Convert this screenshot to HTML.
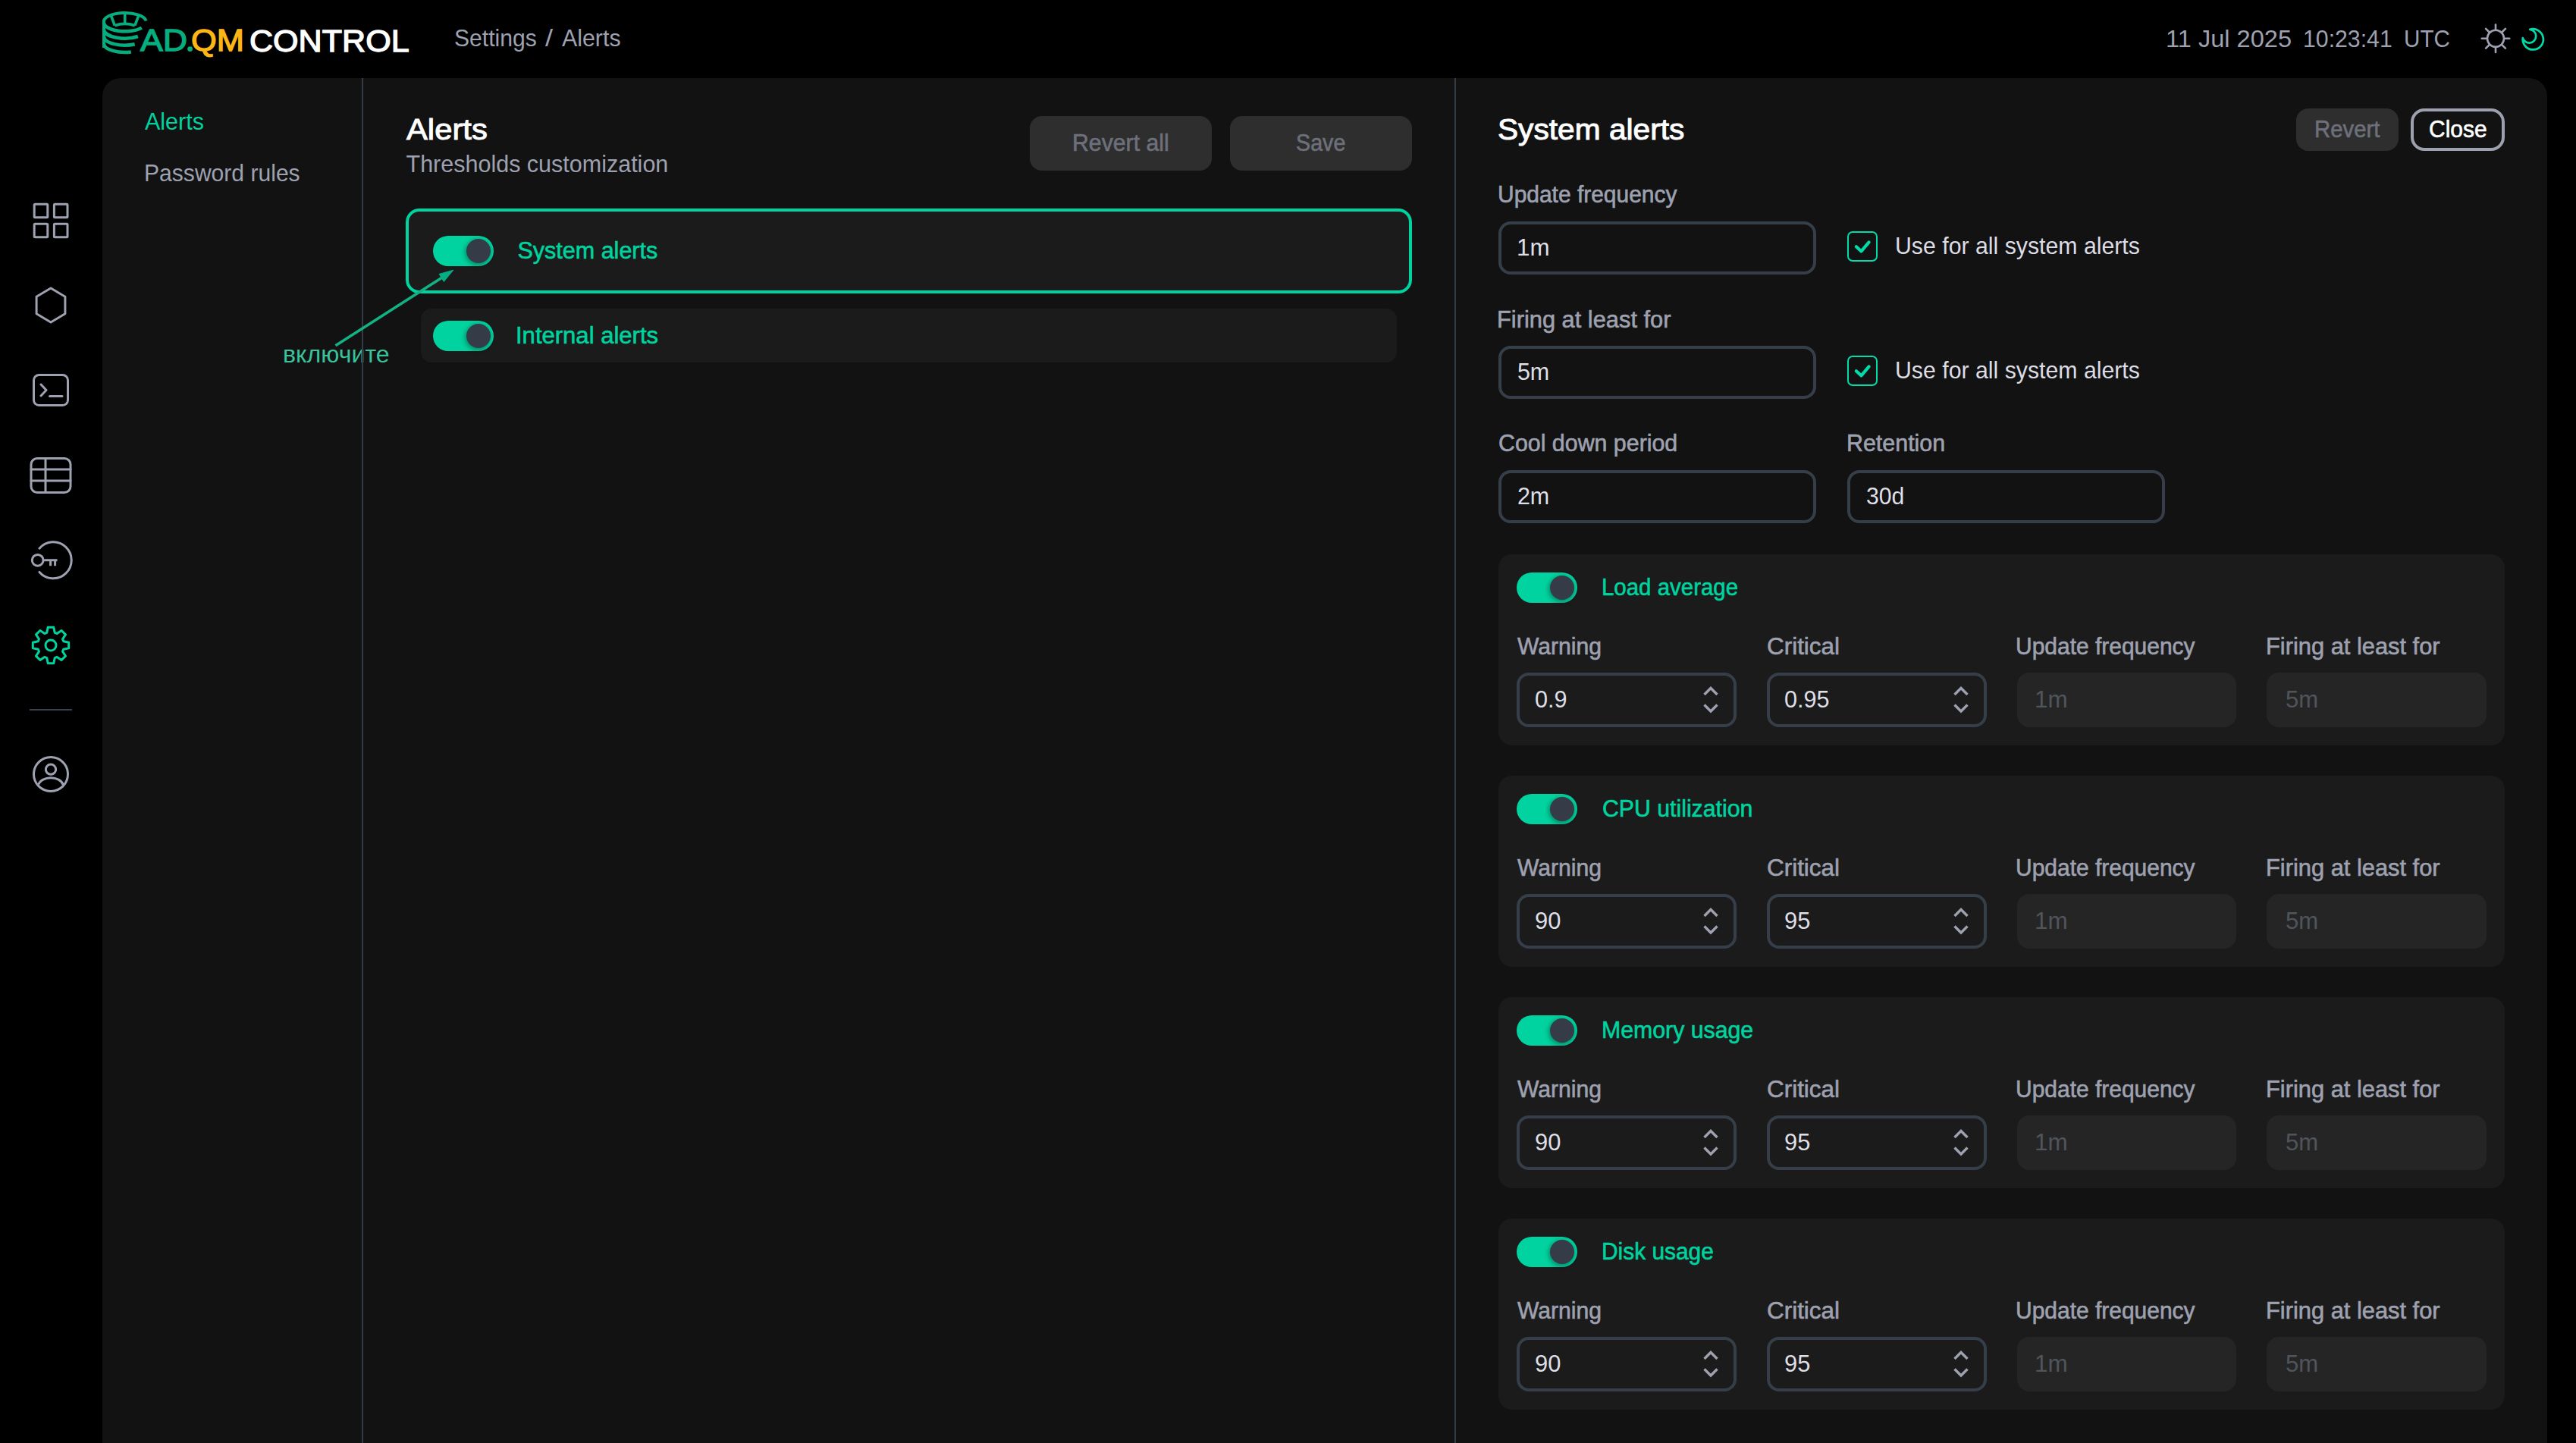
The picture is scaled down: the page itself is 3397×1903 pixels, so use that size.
<!DOCTYPE html>
<html><head><meta charset="utf-8"><title>ADQM Control - Alerts</title><style>
html,body{margin:0;padding:0;width:3397px;height:1903px;overflow:hidden;background:#000;font-family:"Liberation Sans",sans-serif;}
.a{position:absolute;box-sizing:border-box}
.t{position:absolute;line-height:1;white-space:nowrap}
svg{position:absolute;left:0;top:0;overflow:visible}
.tg{position:absolute;width:80px;height:40px;border-radius:20px;background:#00d39f}
.tg i{position:absolute;left:44px;top:4px;width:32px;height:32px;border-radius:50%;background:#363c47;box-shadow:-1px 2px 6px 1px rgba(0,0,0,.33)}
.inp{position:absolute;box-sizing:border-box;border:4px solid #363f49;border-radius:16px}
.dis{position:absolute;border-radius:16px;background:#252525}
.card{position:absolute;background:#1b1b1b;border-radius:18px}
</style></head><body>
<svg width="10" height="10" fill="none" stroke="#06ad7e" stroke-width="4">
<path d="M137,30 A27.6,11.7 0 0,1 192.6,27.5"/>
<path d="M137,26 L137,63"/>
<path d="M137,29.7 A27.6,11.7 0 0,0 186.8,36.6" stroke-width="4.5"/>
<path d="M137,39.1 A27.6,11.7 0 0,0 181.9,48.0" stroke-width="4.5"/>
<path d="M137,48.5 A27.6,11.7 0 0,0 177.7,58.3" stroke-width="4.5"/>
<path d="M137,57.9 A27.6,11.7 0 0,0 172.8,68.5" stroke-width="4.5"/>
<path d="M151.3,33.7 Q164.6,29.0 177.9,33.7" stroke-width="3.6"/>
<path d="M146.4,20.5 L151.3,33.7 M164.7,19 L164.7,31 M182.8,20.5 L177.9,33.7" stroke-width="3.6"/>
</svg>
<div class="t" style="left:184.90px;top:33.22px;font-size:40.5px;color:#06ad7e;transform:scaleX(1.1036);transform-origin:0 0;-webkit-text-stroke:1.3px #06ad7e;">AD</div>
<svg width="10" height="10"><circle cx="250.6" cy="64.6" r="3.4" fill="#06ad7e"/></svg>
<div class="t" style="left:252.46px;top:33.22px;font-size:40.5px;color:#fdb714;transform:scaleX(1.0721);transform-origin:0 0;-webkit-text-stroke:1.3px #fdb714;">QM</div>
<div class="t" style="left:328.87px;top:33.62px;font-size:40.5px;color:#ffffff;transform:scaleX(1.0636);transform-origin:0 0;-webkit-text-stroke:1.3px #ffffff;">CONTROL</div>
<div class="t" style="left:598.71px;top:35.08px;font-size:30.5px;color:#9ea1b0;transform:scaleX(0.9881);transform-origin:0 0;">Settings</div>
<div class="t" style="left:719.00px;top:35.08px;font-size:30.5px;color:#9ea1b0;transform:scaleX(1.1889);transform-origin:0 0;">/</div>
<div class="t" style="left:741.40px;top:35.08px;font-size:30.5px;color:#9ea1b0;transform:scaleX(0.9949);transform-origin:0 0;">Alerts</div>
<div class="t" style="left:2856.16px;top:35.98px;font-size:30.5px;color:#9ea1b0;transform:scaleX(1.0686);transform-origin:0 0;">11 Jul 2025</div>
<div class="t" style="left:3037.32px;top:35.98px;font-size:30.5px;color:#9ea1b0;transform:scaleX(0.9914);transform-origin:0 0;">10:23:41</div>
<div class="t" style="left:3169.76px;top:35.98px;font-size:30.5px;color:#9ea1b0;transform:scaleX(0.9717);transform-origin:0 0;">UTC</div>
<svg width="10" height="10" fill="none" stroke="#9ea1b0" stroke-width="2.6" stroke-linecap="round"><circle cx="3291" cy="50.8" r="11"/><path d="M3303.5,50.8 L3309.2,50.8"/><path d="M3299.8,59.6 L3303.9,63.7"/><path d="M3291.0,63.3 L3291.0,69.0"/><path d="M3282.2,59.6 L3278.1,63.7"/><path d="M3278.5,50.8 L3272.8,50.8"/><path d="M3282.2,42.0 L3278.1,37.9"/><path d="M3291.0,38.3 L3291.0,32.6"/><path d="M3299.8,42.0 L3303.9,37.9"/></svg>
<svg width="10" height="10" fill="none" stroke="#00d9a8" stroke-width="2.7" stroke-linejoin="round" stroke-linecap="round"><path d="M3336.2,38.9 A13.6,13.6 0 1,1 3326.8,50.2 A8.88,8.88 0 1,0 3336.2,38.9 Z"/></svg>
<svg width="10" height="10" fill="none" stroke="#9ea1b0" stroke-width="3" stroke-linejoin="round" stroke-linecap="round"><rect x="45.2" y="269.2" width="17.6" height="17.6" rx="1"/><rect x="71.4" y="269.2" width="17.6" height="17.6" rx="1"/><rect x="45.2" y="295.2" width="17.6" height="17.6" rx="1"/><rect x="71.4" y="295.2" width="17.6" height="17.6" rx="1"/><polygon points="67.0,380.0 48.1,391.2 48.1,413.8 67.0,425.0 85.9,413.8 85.9,391.2"/><rect x="44.5" y="494.5" width="45" height="40" rx="7"/><path d="M54,507 L61,514.5 L54,522 M65.5,522.5 L82,522.5"/><rect x="41" y="604.5" width="52" height="45" rx="8"/><path d="M41,619 L93,619 M41,634 L93,634 M60,604.5 L60,649.5"/><path d="M52,723.2 A24,24 0 1,1 52,754.4"/><circle cx="49.7" cy="738.8" r="7.4"/><path stroke-linecap="butt" d="M57,738.8 L75.5,738.8 M66.6,738.8 L66.6,746.2 M72.6,738.8 L72.6,746.2"/></svg>
<svg width="10" height="10" fill="none" stroke="#00d39f" stroke-width="3" stroke-linejoin="round"><path d="M83.7,845.8 L90.7,847.2 L90.7,854.8 L83.7,856.2 L82.5,859.2 L86.5,865.1 L81.1,870.5 L75.2,866.5 L72.2,867.7 L70.8,874.7 L63.2,874.7 L61.8,867.7 L58.8,866.5 L52.9,870.5 L47.5,865.1 L51.5,859.2 L50.3,856.2 L43.3,854.8 L43.3,847.2 L50.3,845.8 L51.5,842.8 L47.5,836.9 L52.9,831.5 L58.8,835.5 L61.8,834.3 L63.2,827.3 L70.8,827.3 L72.2,834.3 L75.2,835.5 L81.1,831.5 L86.5,836.9 L82.5,842.8 Z"/><circle cx="67" cy="851" r="7"/></svg>
<div class="a" style="left:39px;top:935px;width:56px;height:2px;background:#3a424c"></div>
<svg width="10" height="10" fill="none" stroke="#9ea1b0" stroke-width="3"><circle cx="67" cy="1021" r="22.5"/><circle cx="67" cy="1014.7" r="6.6"/><path d="M50.3,1035.5 C55,1022.5 79,1022.5 83.7,1035.5"/></svg>
<div class="a" style="left:135px;top:103px;width:3224px;height:1850px;background:#121212;border-radius:24px 24px 0 0"></div>
<div class="t" style="left:191.00px;top:145.28px;font-size:30.5px;color:#00d39f;">Alerts</div>
<div class="t" style="left:189.83px;top:213.18px;font-size:30.5px;color:#9ea1b0;transform:scaleX(0.9864);transform-origin:0 0;">Password rules</div>
<div class="t" style="left:535.50px;top:151.46px;font-size:39.5px;color:#ffffff;transform:scaleX(1.0580);transform-origin:0 0;-webkit-text-stroke:1.0px #ffffff;">Alerts</div>
<div class="t" style="left:535.50px;top:201.08px;font-size:30.5px;color:#9ea1b0;">Thresholds customization</div>
<div class="a" style="left:1358px;top:153px;width:240px;height:72px;border-radius:16px;background:#2e2e2e"></div>
<div class="a" style="left:1622px;top:153px;width:240px;height:72px;border-radius:16px;background:#2e2e2e"></div>
<div class="t" style="left:1413.82px;top:173.38px;font-size:30.5px;color:#6d707b;transform:scaleX(0.9912);transform-origin:0 0;-webkit-text-stroke:0.6px #6d707b;">Revert all</div>
<div class="t" style="left:1709.06px;top:173.38px;font-size:30.5px;color:#6d707b;transform:scaleX(0.9412);transform-origin:0 0;-webkit-text-stroke:0.6px #6d707b;">Save</div>
<div class="a" style="left:535px;top:275px;width:1327px;height:112px;border:4px solid #00d39f;border-radius:18px;background:#1b1b1b"></div>
<div class="a" style="left:555px;top:407px;width:1287px;height:71px;border-radius:14px;background:#1b1b1b"></div>
<div class="tg" style="left:571px;top:311px"><i></i></div>
<div class="tg" style="left:571px;top:423px"><i></i></div>
<div class="t" style="left:682.50px;top:315.18px;font-size:30.5px;color:#00d39f;-webkit-text-stroke:0.6px #00d39f;">System alerts</div>
<div class="t" style="left:680.45px;top:426.58px;font-size:30.5px;color:#00d39f;transform:scaleX(1.0176);transform-origin:0 0;-webkit-text-stroke:0.6px #00d39f;">Internal alerts</div>
<div class="t" style="left:372.72px;top:451.76px;font-size:31px;color:#39c29b;transform:scaleX(1.0379);transform-origin:0 0;">включите</div>
<div class="a" style="left:477px;top:103px;width:2px;height:1800px;background:#353c45"></div>
<div class="a" style="left:1918px;top:103px;width:2px;height:1800px;background:#353c45"></div>
<svg width="10" height="10"><path d="M442.5,455.8 L583,366" stroke="#12b282" stroke-width="3.6" fill="none"/><path d="M597.8,356.2 L579.1,361.4 L585.3,371.4 Z" fill="#06ad83" stroke="#06ad83" stroke-width="1" stroke-linejoin="round"/></svg>
<div class="t" style="left:1974.84px;top:151.36px;font-size:39.5px;color:#ffffff;transform:scaleX(1.0295);transform-origin:0 0;-webkit-text-stroke:1.0px #ffffff;">System alerts</div>
<div class="a" style="left:3028px;top:143px;width:135px;height:56px;border-radius:16px;background:#2e2e2e"></div>
<div class="t" style="left:3052.18px;top:154.98px;font-size:30.5px;color:#6d707b;transform:scaleX(0.9614);transform-origin:0 0;-webkit-text-stroke:0.6px #6d707b;">Revert</div>
<div class="a" style="left:3179px;top:143px;width:124px;height:56px;border-radius:18px;border:4px solid #9da0ae"></div>
<div class="t" style="left:3203.02px;top:154.98px;font-size:30.5px;color:#ffffff;transform:scaleX(0.9829);transform-origin:0 0;-webkit-text-stroke:0.6px #ffffff;">Close</div>
<div class="t" style="left:1975.04px;top:241.08px;font-size:30.5px;color:#9ea1b0;transform:scaleX(0.9821);transform-origin:0 0;-webkit-text-stroke:0.6px #9ea1b0;">Update frequency</div>
<div class="inp" style="left:1976px;top:292px;width:419px;height:70px"></div>
<div class="t" style="left:1999.84px;top:311.28px;font-size:30.5px;color:#dfdfe7;transform:scaleX(1.0282);transform-origin:0 0;">1m</div>
<div class="a" style="left:2436px;top:305px;width:40px;height:40px;border:2.6px solid #00dcaa;border-radius:7px"></div>
<svg width="10" height="10"><path d="M2447.8,325.3 L2454.5,331.4 L2464.6,319.4" stroke="#00dcaa" stroke-width="4.2" fill="none" stroke-linecap="round" stroke-linejoin="round"/></svg>
<div class="t" style="left:2499.32px;top:308.98px;font-size:30.5px;color:#dcdce4;transform:scaleX(0.9923);transform-origin:0 0;">Use for all system alerts</div>
<div class="t" style="left:1974.48px;top:405.98px;font-size:30.5px;color:#9ea1b0;transform:scaleX(1.0102);transform-origin:0 0;-webkit-text-stroke:0.6px #9ea1b0;">Firing at least for</div>
<div class="inp" style="left:1976px;top:456px;width:419px;height:70px"></div>
<div class="t" style="left:2000.90px;top:475.28px;font-size:30.5px;color:#dfdfe7;">5m</div>
<div class="a" style="left:2436px;top:469px;width:40px;height:40px;border:2.6px solid #00dcaa;border-radius:7px"></div>
<svg width="10" height="10"><path d="M2447.8,489.3 L2454.5,495.4 L2464.6,483.4" stroke="#00dcaa" stroke-width="4.2" fill="none" stroke-linecap="round" stroke-linejoin="round"/></svg>
<div class="t" style="left:2499.32px;top:472.98px;font-size:30.5px;color:#dcdce4;transform:scaleX(0.9923);transform-origin:0 0;">Use for all system alerts</div>
<div class="t" style="left:1975.50px;top:569.18px;font-size:30.5px;color:#9ea1b0;transform:scaleX(0.9953);transform-origin:0 0;-webkit-text-stroke:0.6px #9ea1b0;">Cool down period</div>
<div class="inp" style="left:1976px;top:620px;width:419px;height:70px"></div>
<div class="t" style="left:2000.90px;top:639.28px;font-size:30.5px;color:#dfdfe7;">2m</div>
<div class="t" style="left:2435.31px;top:569.08px;font-size:30.5px;color:#9ea1b0;transform:scaleX(0.9969);transform-origin:0 0;-webkit-text-stroke:0.6px #9ea1b0;">Retention</div>
<div class="inp" style="left:2436px;top:620px;width:419px;height:70px"></div>
<div class="t" style="left:2460.91px;top:639.28px;font-size:30.5px;color:#dfdfe7;transform:scaleX(0.9896);transform-origin:0 0;">30d</div>
<div class="card" style="left:1976px;top:731px;width:1327px;height:252px"></div>
<div class="tg" style="left:2000px;top:755px"><i></i></div>
<div class="t" style="left:2111.67px;top:759.18px;font-size:30.5px;color:#00d39f;transform:scaleX(0.9652);transform-origin:0 0;-webkit-text-stroke:0.6px #00d39f;">Load average</div>
<div class="t" style="left:2000.80px;top:837.48px;font-size:30.5px;color:#9ea1b0;transform:scaleX(0.9874);transform-origin:0 0;-webkit-text-stroke:0.6px #9ea1b0;">Warning</div>
<div class="t" style="left:2329.77px;top:837.48px;font-size:30.5px;color:#9ea1b0;transform:scaleX(1.0300);transform-origin:0 0;-webkit-text-stroke:0.6px #9ea1b0;">Critical</div>
<div class="t" style="left:2658.34px;top:837.48px;font-size:30.5px;color:#9ea1b0;transform:scaleX(0.9825);transform-origin:0 0;-webkit-text-stroke:0.6px #9ea1b0;">Update frequency</div>
<div class="t" style="left:2987.88px;top:837.48px;font-size:30.5px;color:#9ea1b0;transform:scaleX(1.0107);transform-origin:0 0;-webkit-text-stroke:0.6px #9ea1b0;">Firing at least for</div>
<div class="inp" style="left:2000px;top:887px;width:290px;height:72px"></div>
<div class="t" style="left:2023.59px;top:907.18px;font-size:30.5px;color:#dfdfe7;transform:scaleX(1.0050);transform-origin:0 0;">0.9</div>
<svg width="10" height="10" fill="none" stroke="#9ea1b0" stroke-width="3.4"><path d="M2247.5,916 L2256,907.5 L2264.5,916"/><path d="M2247.5,929.5 L2256,938 L2264.5,929.5"/></svg>
<div class="inp" style="left:2330px;top:887px;width:290px;height:72px"></div>
<div class="t" style="left:2353.30px;top:907.18px;font-size:30.5px;color:#dfdfe7;transform:scaleX(1.0035);transform-origin:0 0;">0.95</div>
<svg width="10" height="10" fill="none" stroke="#9ea1b0" stroke-width="3.4"><path d="M2577.5,916 L2586,907.5 L2594.5,916"/><path d="M2577.5,929.5 L2586,938 L2594.5,929.5"/></svg>
<div class="dis" style="left:2660px;top:887px;width:289px;height:72px"></div>
<div class="t" style="left:2682.93px;top:907.18px;font-size:30.5px;color:#50555c;transform:scaleX(1.0333);transform-origin:0 0;">1m</div>
<div class="dis" style="left:2989px;top:887px;width:290px;height:72px"></div>
<div class="t" style="left:3013.58px;top:907.18px;font-size:30.5px;color:#50555c;transform:scaleX(1.0200);transform-origin:0 0;">5m</div>
<div class="card" style="left:1976px;top:1023px;width:1327px;height:252px"></div>
<div class="tg" style="left:2000px;top:1047px"><i></i></div>
<div class="t" style="left:2112.61px;top:1051.18px;font-size:30.5px;color:#00d39f;transform:scaleX(0.9914);transform-origin:0 0;-webkit-text-stroke:0.6px #00d39f;">CPU utilization</div>
<div class="t" style="left:2000.80px;top:1129.48px;font-size:30.5px;color:#9ea1b0;transform:scaleX(0.9874);transform-origin:0 0;-webkit-text-stroke:0.6px #9ea1b0;">Warning</div>
<div class="t" style="left:2329.77px;top:1129.48px;font-size:30.5px;color:#9ea1b0;transform:scaleX(1.0300);transform-origin:0 0;-webkit-text-stroke:0.6px #9ea1b0;">Critical</div>
<div class="t" style="left:2658.34px;top:1129.48px;font-size:30.5px;color:#9ea1b0;transform:scaleX(0.9825);transform-origin:0 0;-webkit-text-stroke:0.6px #9ea1b0;">Update frequency</div>
<div class="t" style="left:2987.88px;top:1129.48px;font-size:30.5px;color:#9ea1b0;transform:scaleX(1.0107);transform-origin:0 0;-webkit-text-stroke:0.6px #9ea1b0;">Firing at least for</div>
<div class="inp" style="left:2000px;top:1179px;width:290px;height:72px"></div>
<div class="t" style="left:2023.59px;top:1199.18px;font-size:30.5px;color:#dfdfe7;transform:scaleX(1.0125);transform-origin:0 0;">90</div>
<svg width="10" height="10" fill="none" stroke="#9ea1b0" stroke-width="3.4"><path d="M2247.5,1208 L2256,1199.5 L2264.5,1208"/><path d="M2247.5,1221.5 L2256,1230 L2264.5,1221.5"/></svg>
<div class="inp" style="left:2330px;top:1179px;width:290px;height:72px"></div>
<div class="t" style="left:2353.29px;top:1199.18px;font-size:30.5px;color:#dfdfe7;transform:scaleX(1.0125);transform-origin:0 0;">95</div>
<svg width="10" height="10" fill="none" stroke="#9ea1b0" stroke-width="3.4"><path d="M2577.5,1208 L2586,1199.5 L2594.5,1208"/><path d="M2577.5,1221.5 L2586,1230 L2594.5,1221.5"/></svg>
<div class="dis" style="left:2660px;top:1179px;width:289px;height:72px"></div>
<div class="t" style="left:2682.93px;top:1199.18px;font-size:30.5px;color:#50555c;transform:scaleX(1.0333);transform-origin:0 0;">1m</div>
<div class="dis" style="left:2989px;top:1179px;width:290px;height:72px"></div>
<div class="t" style="left:3013.58px;top:1199.18px;font-size:30.5px;color:#50555c;transform:scaleX(1.0200);transform-origin:0 0;">5m</div>
<div class="card" style="left:1976px;top:1315px;width:1327px;height:252px"></div>
<div class="tg" style="left:2000px;top:1339px"><i></i></div>
<div class="t" style="left:2111.62px;top:1343.18px;font-size:30.5px;color:#00d39f;transform:scaleX(0.9925);transform-origin:0 0;-webkit-text-stroke:0.6px #00d39f;">Memory usage</div>
<div class="t" style="left:2000.80px;top:1421.48px;font-size:30.5px;color:#9ea1b0;transform:scaleX(0.9874);transform-origin:0 0;-webkit-text-stroke:0.6px #9ea1b0;">Warning</div>
<div class="t" style="left:2329.77px;top:1421.48px;font-size:30.5px;color:#9ea1b0;transform:scaleX(1.0300);transform-origin:0 0;-webkit-text-stroke:0.6px #9ea1b0;">Critical</div>
<div class="t" style="left:2658.34px;top:1421.48px;font-size:30.5px;color:#9ea1b0;transform:scaleX(0.9825);transform-origin:0 0;-webkit-text-stroke:0.6px #9ea1b0;">Update frequency</div>
<div class="t" style="left:2987.88px;top:1421.48px;font-size:30.5px;color:#9ea1b0;transform:scaleX(1.0107);transform-origin:0 0;-webkit-text-stroke:0.6px #9ea1b0;">Firing at least for</div>
<div class="inp" style="left:2000px;top:1471px;width:290px;height:72px"></div>
<div class="t" style="left:2023.59px;top:1491.18px;font-size:30.5px;color:#dfdfe7;transform:scaleX(1.0125);transform-origin:0 0;">90</div>
<svg width="10" height="10" fill="none" stroke="#9ea1b0" stroke-width="3.4"><path d="M2247.5,1500 L2256,1491.5 L2264.5,1500"/><path d="M2247.5,1513.5 L2256,1522 L2264.5,1513.5"/></svg>
<div class="inp" style="left:2330px;top:1471px;width:290px;height:72px"></div>
<div class="t" style="left:2353.29px;top:1491.18px;font-size:30.5px;color:#dfdfe7;transform:scaleX(1.0125);transform-origin:0 0;">95</div>
<svg width="10" height="10" fill="none" stroke="#9ea1b0" stroke-width="3.4"><path d="M2577.5,1500 L2586,1491.5 L2594.5,1500"/><path d="M2577.5,1513.5 L2586,1522 L2594.5,1513.5"/></svg>
<div class="dis" style="left:2660px;top:1471px;width:289px;height:72px"></div>
<div class="t" style="left:2682.93px;top:1491.18px;font-size:30.5px;color:#50555c;transform:scaleX(1.0333);transform-origin:0 0;">1m</div>
<div class="dis" style="left:2989px;top:1471px;width:290px;height:72px"></div>
<div class="t" style="left:3013.58px;top:1491.18px;font-size:30.5px;color:#50555c;transform:scaleX(1.0200);transform-origin:0 0;">5m</div>
<div class="card" style="left:1976px;top:1607px;width:1327px;height:252px"></div>
<div class="tg" style="left:2000px;top:1631px"><i></i></div>
<div class="t" style="left:2111.64px;top:1635.18px;font-size:30.5px;color:#00d39f;transform:scaleX(0.9797);transform-origin:0 0;-webkit-text-stroke:0.6px #00d39f;">Disk usage</div>
<div class="t" style="left:2000.80px;top:1713.48px;font-size:30.5px;color:#9ea1b0;transform:scaleX(0.9874);transform-origin:0 0;-webkit-text-stroke:0.6px #9ea1b0;">Warning</div>
<div class="t" style="left:2329.77px;top:1713.48px;font-size:30.5px;color:#9ea1b0;transform:scaleX(1.0300);transform-origin:0 0;-webkit-text-stroke:0.6px #9ea1b0;">Critical</div>
<div class="t" style="left:2658.34px;top:1713.48px;font-size:30.5px;color:#9ea1b0;transform:scaleX(0.9825);transform-origin:0 0;-webkit-text-stroke:0.6px #9ea1b0;">Update frequency</div>
<div class="t" style="left:2987.88px;top:1713.48px;font-size:30.5px;color:#9ea1b0;transform:scaleX(1.0107);transform-origin:0 0;-webkit-text-stroke:0.6px #9ea1b0;">Firing at least for</div>
<div class="inp" style="left:2000px;top:1763px;width:290px;height:72px"></div>
<div class="t" style="left:2023.59px;top:1783.18px;font-size:30.5px;color:#dfdfe7;transform:scaleX(1.0125);transform-origin:0 0;">90</div>
<svg width="10" height="10" fill="none" stroke="#9ea1b0" stroke-width="3.4"><path d="M2247.5,1792 L2256,1783.5 L2264.5,1792"/><path d="M2247.5,1805.5 L2256,1814 L2264.5,1805.5"/></svg>
<div class="inp" style="left:2330px;top:1763px;width:290px;height:72px"></div>
<div class="t" style="left:2353.29px;top:1783.18px;font-size:30.5px;color:#dfdfe7;transform:scaleX(1.0125);transform-origin:0 0;">95</div>
<svg width="10" height="10" fill="none" stroke="#9ea1b0" stroke-width="3.4"><path d="M2577.5,1792 L2586,1783.5 L2594.5,1792"/><path d="M2577.5,1805.5 L2586,1814 L2594.5,1805.5"/></svg>
<div class="dis" style="left:2660px;top:1763px;width:289px;height:72px"></div>
<div class="t" style="left:2682.93px;top:1783.18px;font-size:30.5px;color:#50555c;transform:scaleX(1.0333);transform-origin:0 0;">1m</div>
<div class="dis" style="left:2989px;top:1763px;width:290px;height:72px"></div>
<div class="t" style="left:3013.58px;top:1783.18px;font-size:30.5px;color:#50555c;transform:scaleX(1.0200);transform-origin:0 0;">5m</div>
</body></html>
